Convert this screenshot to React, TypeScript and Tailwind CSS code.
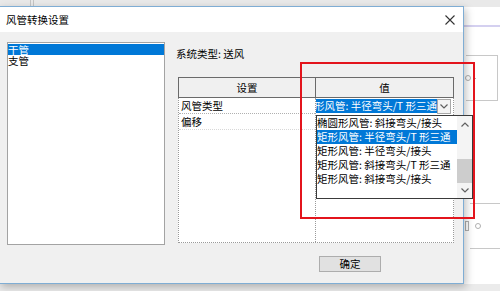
import React from "react";

const font = "font-['Noto_Sans_CJK_SC','Microsoft_YaHei',sans-serif]";

const options = [
  "椭圆形风管: 斜接弯头/接头",
  "矩形风管: 半径弯头/T 形三通",
  "矩形风管: 半径弯头/接头",
  "矩形风管: 斜接弯头/T 形三通",
  "矩形风管: 斜接弯头/接头",
];

function Chevron({ up = false }: { up?: boolean }) {
  return (
    <svg width="8" height="5" viewBox="0 0 8 5" className={up ? "rotate-180" : ""}>
      <path d="M0.5 0.5 L4 4 L7.5 0.5" fill="none" stroke="#606060" strokeWidth="1.2" />
    </svg>
  );
}

export default function App() {
  return (
    <div className={`relative w-[500px] h-[291px] overflow-hidden bg-white text-[10.5px] text-black ${font}`}>
      {/* app behind the dialog */}
      <div className="absolute left-0 top-0 w-full h-[7px] bg-[#e9e9e9] flex">
        <div className="ml-[30px] w-px h-full bg-[#c4c4c4]" />
        <div className="ml-[2px] w-px h-full bg-[#c4c4c4]" />
      </div>
      <div className="absolute left-[463px] top-[25px] w-[40px] h-[2px] bg-[#d4d0f0]" />
      <div className="absolute left-[466px] top-[55px] w-[32px] h-[46px] border-t border-r border-b border-[#c8c8c8]" />
      <div className="absolute left-[465px] top-[75px] w-[6px] h-[6px] rounded-full border border-[#b0b0b0]" />
      <div className="absolute left-[473px] top-[78px] w-[3px] h-px bg-[#b0b0b0]" />
      <div className="absolute left-[470px] top-[203px] w-[32px] h-[46px] border-t border-b border-[#c8c8c8]" />
      <div className="absolute left-[465px] top-[221px] w-[4px] h-[10px] border border-[#b0b0b0]" />
      <div className="absolute left-[475px] top-[223px] w-[6px] h-[6px] rounded-full border border-[#b0b0b0]" />
      <div className="absolute left-0 top-[284px] w-full h-[7px] bg-[#ebebeb]" />

      {/* dialog */}
      <div className="absolute left-[-1px] top-[6px] w-[465px] h-[278px] border border-[#7fadd4] bg-[#f0f0f0] flex flex-col shadow-[2px_3px_8px_rgba(0,0,0,0.25)]">
        <div className="h-[25px] bg-white flex items-center justify-between pl-[6px] pr-[8px]">
          <span>风管转换设置</span>
          <svg width="10" height="10" viewBox="0 0 10 10">
            <path d="M0.5 0.5 L9.5 9.5 M9.5 0.5 L0.5 9.5" stroke="#333" strokeWidth="1.1" />
          </svg>
        </div>

        <div className="flex-1 flex pl-[7px] pt-[10px]">
          <div className="w-[158px] h-[203px] bg-white border border-[#a3a3a3] pt-px">
            <div className="bg-[#0078d7] text-white h-[11px] leading-[11px]">干管</div>
            <div className="h-[11px] leading-[11px]">支管</div>
          </div>

          <div className="ml-[11px] flex flex-col">
            <div className="mt-[5px] h-[14px] leading-[14px]">系统类型: 送风</div>

            <div className="ml-[2px] mt-[16px] w-[276px]">
              <div className="h-[21px] flex border border-[#6a6a6a] bg-[#f0f0f0]">
                <div className="w-[137px] border-r border-[#6a6a6a] flex items-center justify-center">设置</div>
                <div className="flex-1 flex items-center justify-center">值</div>
              </div>
              <div className="h-[145px] flex bg-white border-x border-b border-dotted border-[#9a9a9a]">
                <div className="w-[137px] border-r border-dotted border-[#9a9a9a]">
                  <div className="h-[16px] leading-[16px] pl-[2px] border-b border-dotted border-[#b0b0b0]">风管类型</div>
                  <div className="h-[16px] leading-[16px] pl-[2px] border-b border-dotted border-[#d8d8d8]">偏移</div>
                </div>
                <div className="flex-1">
                  <div className="h-[16px] flex items-center">
                    <div className="w-[121px] h-[14px] bg-[#0078d7] text-white overflow-hidden flex justify-end leading-[14px] whitespace-nowrap">
                      <span className="shrink-0">矩形风管: 半径弯头/T 形三通</span>
                    </div>
                    <div className="w-[14px] h-[15px] border border-[#a8a8a8] bg-[#f4f4f4] flex items-center justify-center">
                      <Chevron />
                    </div>
                  </div>
                </div>
              </div>
            </div>

            <div className="mt-[13px] ml-[143px] w-[62px] h-[16px] border border-[#adadad] bg-[#e1e1e1] flex items-center justify-center">
              确定
            </div>
          </div>
        </div>
      </div>

      {/* open dropdown list */}
      <div className="absolute left-[316px] top-[115px] w-[157px] h-[84px] bg-white border border-[#3a3a3a] flex">
        <div className="flex-1 whitespace-nowrap overflow-hidden">
          {options.map((o, i) => (
            <div
              key={o}
              className={`h-[14px] leading-[14px] ${i === 1 ? "bg-[#0078d7] text-white" : ""}`}
            >
              {o}
            </div>
          ))}
        </div>
        <div className="w-[15px] bg-[#f4f4f4] flex flex-col items-center">
          <div className="h-[16px] flex items-center justify-center">
            <Chevron up />
          </div>
          <div className="mt-[27px] w-[15px] h-[24px] bg-[#cdcdcd]" />
          <div className="flex-1 flex items-center justify-center">
            <Chevron />
          </div>
        </div>
      </div>

      {/* red annotation box */}
      <div className="absolute left-[300px] top-[62px] w-[175px] h-[157px] border-2 border-[#e3141c]" />
    </div>
  );
}
